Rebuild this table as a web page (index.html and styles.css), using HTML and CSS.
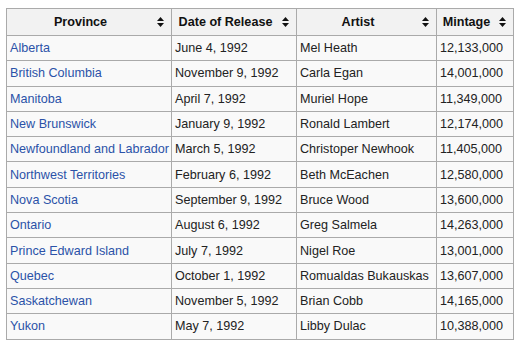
FILE: index.html
```html
<!DOCTYPE html>
<html>
<head>
<meta charset="utf-8">
<link rel="stylesheet" href="styles.css">
</head>
<body>
<table class="wikitable">
<colgroup>
<col class="c-prov">
<col class="c-date">
<col class="c-artist">
<col class="c-mint">
</colgroup>
<thead>
<tr class="head">
<th>Province<svg class="sort" viewBox="0 0 7 10" width="7" height="10"><path d="M0 4L3.5 0L7 4Z M0 6L3.5 10L7 6Z"/></svg></th>
<th>Date of Release<svg class="sort" viewBox="0 0 7 10" width="7" height="10"><path d="M0 4L3.5 0L7 4Z M0 6L3.5 10L7 6Z"/></svg></th>
<th>Artist<svg class="sort" viewBox="0 0 7 10" width="7" height="10"><path d="M0 4L3.5 0L7 4Z M0 6L3.5 10L7 6Z"/></svg></th>
<th>Mintage<svg class="sort" viewBox="0 0 7 10" width="7" height="10"><path d="M0 4L3.5 0L7 4Z M0 6L3.5 10L7 6Z"/></svg></th>
</tr>
</thead>
<tbody>
<tr><td><a href="#">Alberta</a></td><td>June 4, 1992</td><td>Mel Heath</td><td>12,133,000</td></tr>
<tr><td><a href="#">British Columbia</a></td><td>November 9, 1992</td><td>Carla Egan</td><td>14,001,000</td></tr>
<tr><td><a href="#">Manitoba</a></td><td>April 7, 1992</td><td>Muriel Hope</td><td>11,349,000</td></tr>
<tr><td><a href="#">New Brunswick</a></td><td>January 9, 1992</td><td>Ronald Lambert</td><td>12,174,000</td></tr>
<tr><td><a href="#">Newfoundland and Labrador</a></td><td>March 5, 1992</td><td>Christoper Newhook</td><td>11,405,000</td></tr>
<tr><td><a href="#">Northwest Territories</a></td><td>February 6, 1992</td><td>Beth McEachen</td><td>12,580,000</td></tr>
<tr><td><a href="#">Nova Scotia</a></td><td>September 9, 1992</td><td>Bruce Wood</td><td>13,600,000</td></tr>
<tr><td><a href="#">Ontario</a></td><td>August 6, 1992</td><td>Greg Salmela</td><td>14,263,000</td></tr>
<tr><td><a href="#">Prince Edward Island</a></td><td>July 7, 1992</td><td>Nigel Roe</td><td>13,001,000</td></tr>
<tr><td><a href="#">Quebec</a></td><td>October 1, 1992</td><td>Romualdas Bukauskas</td><td>13,607,000</td></tr>
<tr><td><a href="#">Saskatchewan</a></td><td>November 5, 1992</td><td>Brian Cobb</td><td>14,165,000</td></tr>
<tr><td><a href="#">Yukon</a></td><td>May 7, 1992</td><td>Libby Dulac</td><td>10,388,000</td></tr>
</tbody>
</table>
</body>
</html>
```

FILE: styles.css
```css
html, body {
  background: #ffffff;
}
body {
  margin: 8px 0 0 6px;
  font-family: "Liberation Sans", Arial, sans-serif;
  font-size: 12.6px;
  color: #222222;
}
.wikitable {
  border-collapse: collapse;
  border: 1px solid #aaaaaa;
  background: #f9f9f9;
  table-layout: fixed;
  width: 507px;
}
.c-prov { width: 165px; }
.c-date { width: 125px; }
.c-artist { width: 140px; }
.c-mint { width: 77px; }
.wikitable th,
.wikitable td {
  border: 1px solid #aaaaaa;
  line-height: 16px;
  white-space: nowrap;
  overflow: hidden;
}
.wikitable th {
  position: relative;
  background: #f2f2f2;
  font-weight: bold;
  text-align: center;
  padding: 0 21px 0 4px;
  height: 26px;
  color: #111111;
}
.wikitable td {
  text-align: left;
  padding: 0 3px;
  height: 24.3px;
}
.wikitable a {
  color: #2b52a8;
  text-decoration: none;
}
.sort {
  position: absolute;
  right: 7px;
  top: 50%;
  margin-top: -5px;
  fill: #111111;
}
```
